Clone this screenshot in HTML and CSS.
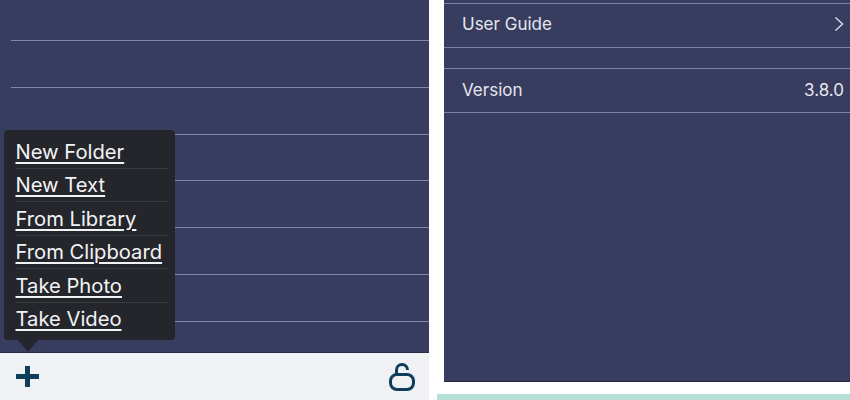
FILE: index.html
```html
<!DOCTYPE html>
<html lang="en">
<head>
<meta charset="utf-8">
<title>Menu and settings</title>
<link rel="stylesheet" href="styles.css">
</head>
<body>
<div class="page">
  <section class="left">
    <div class="list">
      <div class="row"></div><div class="row"></div><div class="row"></div><div class="row"></div><div class="row"></div><div class="row"></div><div class="row"></div>
    </div>
    <div class="toolbar">
      <svg class="plus" width="23" height="21" viewBox="0 0 23 21"><path d="M11.500 0v21M0 10.500h23" fill="none" stroke="#0f3d5c" stroke-width="5"/></svg>
      <svg class="lock" width="26" height="28" viewBox="0 0 26 28"><rect x="1.500" y="11.500" width="23" height="15" rx="6.500" fill="none" stroke="#0f3d5c" stroke-width="3"/><path d="M7.500 11V7a5.500 5.500 0 0 1 11 0" fill="none" stroke="#0f3d5c" stroke-width="3"/></svg>
    </div>
    <nav class="popup">
      <a class="item">New Folder</a>
      <a class="item">New Text</a>
      <a class="item">From Library</a>
      <a class="item">From Clipboard</a>
      <a class="item">Take Photo</a>
      <a class="item">Take Video</a>
    </nav>
  </section>
  <section class="right">
    <div class="panel">
      <div class="setting first"><span>User Guide</span>
        <svg width="10" height="16" viewBox="0 0 10 16"><path d="M1.500 1.500 8.500 8l-7 6.500" fill="none" stroke="#d5d8e4" stroke-width="1.500"/></svg>
      </div>
      <div class="spacer"></div>
      <div class="setting"><span>Version</span><span>3.8.0</span></div>
    </div>
    <div class="teal"></div>
  </section>
</div>
</body>
</html>
```
FILE: styles.css
```css
* { box-sizing: border-box; }
html, body { margin: 0; height: 100%; }
body { background: #fff; font-family: Inter, "Liberation Sans", sans-serif; overflow: hidden; }
.page { display: flex; width: 850px; height: 400px; }
.left { position: relative; width: 429px; height: 400px; display: flex; flex-direction: column; }
.list { height: 353px; background: #383c5e; padding-left: 11px; border-bottom: 1px solid #2a2c45; }
.row { height: 46.800px; border-bottom: 1px solid #8088a8; }
.row:first-child { height: 41px; }
.toolbar { height: 47px; background: #eff1f5; display: flex; justify-content: space-between; align-items: center; padding: 0 14px 0 16px; }
.popup { position: absolute; left: 4px; top: 130px; width: 171px; height: 210px; background: #25262c; border-radius: 4px; padding: 5px 7px 5px 12px; display: flex; flex-direction: column; }
.popup::after { content: ""; position: absolute; left: 14px; bottom: -12px; border: 10px solid transparent; border-bottom: 0; border-top: 12px solid #25262c; }
.item { flex: 1; display: flex; align-items: center; margin-left: -0.500px; font-size: 20.200px; color: #f2f3f5; text-decoration: underline; text-underline-offset: 3px; border-bottom: 1px solid #3b3d44; }
.item:last-child { border-bottom: 0; }
.right { flex: 1; margin-left: 8px; display: flex; flex-direction: column; }
.panel { height: 382px; margin-left: 7px; background: #383c5e; padding-top: 3px; border-bottom: 1px solid #24263c; }
.setting { height: 45px; display: flex; justify-content: space-between; align-items: center; padding: 0 6px 3px 18px; font-size: 17px; color: #e4e6ee; border-top: 1px solid #7c83a4; border-bottom: 1px solid #7c83a4; }
.setting:last-child { padding-bottom: 1px; }
.spacer { height: 20px; }
.teal { margin-top: auto; height: 6px; background: #b5e0d8; }
```
